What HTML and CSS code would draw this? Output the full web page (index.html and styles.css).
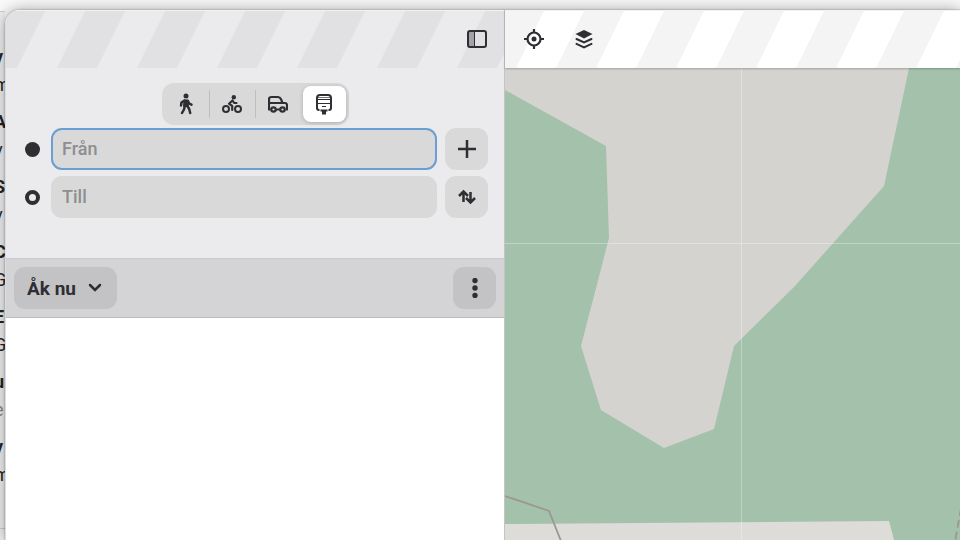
FILE: index.html
```
<!DOCTYPE html>
<html lang="sv">
<head>
  <meta charset="utf-8">
  <title>Kartor</title>
  <link rel="stylesheet" href="styles.css">
</head>
<body>
  <div class="desktop">
    <div class="backdrop" aria-hidden="true">
      <ul class="mail-list">
        <li><b>v</b><span>m</span></li>
        <li><b>A</b><span>v</span></li>
        <li><b>S</b><span>v</span></li>
        <li><b>C</b><span>G</span></li>
        <li><b>E</b><span>G</span></li>
        <li><b>u</b><span class="dim">e</span></li>
        <li><b>v</b><span>m</span></li>
      </ul>
    </div>

    <main class="window">
      <section class="sidebar">
        <header class="headerbar headerbar-side">
          <button type="button" class="icon-button" aria-label="Visa sidopanel">
            <svg width="20" height="18" viewBox="0 0 20 18">
              <path d="M2 2h5v14H2z" fill="#a3a3a6"/>
              <rect x="1" y="1" width="18" height="16" rx="2" fill="none" stroke="#2e2e33" stroke-width="2"/>
              <path d="M7.500 1v16" stroke="#2e2e33" stroke-width="1"/>
            </svg>
          </button>
        </header>

        <form class="route">
          <div class="modes" role="radiogroup" aria-label="Färdsätt">
            <label class="mode">
              <input type="radio" name="mode" value="walk" aria-label="Gå">
              <svg width="20" height="22" viewBox="0 0 20 22" fill="none" stroke="#2e2e33" stroke-linecap="round" stroke-linejoin="round">
                <circle cx="10" cy="3" r="2.500" fill="#2e2e33" stroke="none"/>
                <path d="M8.500 7.500h3l.5 5.500H8z" fill="#2e2e33" stroke-width="2"/>
                <path d="M8.500 7.500L5.500 9.500 5 12.500M11.800 7.800l1.400 2.700 2.300 1.200M8.700 13.500L8 16.500 6 20M11 12.500l2.200 3.500 1 4" stroke-width="2.500"/>
              </svg>
            </label>
            <span class="divider"></span>
            <label class="mode">
              <input type="radio" name="mode" value="bike" aria-label="Cykla">
              <svg width="20" height="20" viewBox="0 0 20 20" fill="none" stroke="#2e2e33" stroke-linecap="round" stroke-linejoin="round">
                <circle cx="4" cy="15" r="3" stroke-width="2"/>
                <circle cx="16" cy="15" r="3" stroke-width="2"/>
                <circle cx="11.800" cy="3.200" r="2.200" fill="#2e2e33" stroke="none"/>
                <path d="M14.500 9h-2.300L10.500 6.500 7 9.700l3.200 2.300v4" stroke-width="2.200"/>
              </svg>
            </label>
            <span class="divider"></span>
            <label class="mode">
              <input type="radio" name="mode" value="car" aria-label="Kör">
              <svg width="20" height="20" viewBox="0 0 20 20" fill="none" stroke="#2e2e33" stroke-linejoin="round">
                <path d="M2.500 15.500H1V5.500Q1 3 3.500 3H10q2 0 3 2.200L14.500 9H17q2 0 2 2.500v4h-1.500M8 15.500h4" stroke-width="2.200"/>
                <path d="M1 9h13.500" stroke-width="2"/>
                <circle cx="5.500" cy="15.500" r="2.200" stroke-width="2.200"/>
                <circle cx="14.500" cy="15.500" r="2.200" stroke-width="2.200"/>
              </svg>
            </label>
            <label class="mode mode-last">
              <input type="radio" name="mode" value="transit" aria-label="Kollektivtrafik" checked>
              <svg width="20" height="22" viewBox="0 0 20 22" fill="none" stroke="#2e2e33" stroke-linejoin="round">
                <path d="M5.500 17H5q-2 0-2-2V5q0-3 3-3h8q3 0 3 3v10q0 2-2 2h-.5" stroke-width="2"/>
                <path d="M4 4.500h12" stroke="#77777a" stroke-width="1"/>
                <path d="M3 6.500h14M3 10.500h14" stroke-width="1"/>
                <path d="M8 13.500h4" stroke-width="1"/>
                <path d="M6.500 16.500h7v2H12v3H8v-3H6.500z" fill="#2e2e33" stroke="none"/>
              </svg>
            </label>
          </div>

          <div class="stop">
            <span class="dot dot-from"></span>
            <input type="text" class="entry entry-active" placeholder="Från" aria-label="Från" autofocus>
            <button type="button" class="square-button" aria-label="Lägg till stopp">
              <svg width="20" height="20" viewBox="0 0 20 20">
                <path d="M10 1v18M1 10h18" stroke="#2e2e33" stroke-width="2.500"/>
              </svg>
            </button>
          </div>
          <div class="stop">
            <span class="dot dot-to"></span>
            <input type="text" class="entry" placeholder="Till" aria-label="Till">
            <button type="button" class="square-button" aria-label="Byt riktning">
              <svg width="20" height="16" viewBox="0 0 20 16" fill="none" stroke="#2e2e33" stroke-width="2.500" stroke-linejoin="miter">
                <path d="M6.500 13V3M2 7l4.500-4.500L11 7M13.500 3v10M9 9l4.500 4.500L18 9"/>
              </svg>
            </button>
          </div>
        </form>

        <div class="toolbar">
          <button type="button" class="time-button">
            Åk nu
            <svg width="14" height="10" viewBox="0 0 14 10">
              <path d="M2 2l5 5 5-5" fill="none" stroke="#2e2e33" stroke-width="2.500" stroke-linecap="round"/>
            </svg>
          </button>
          <button type="button" class="square-button menu-button" aria-label="Alternativ">
            <svg width="6" height="20" viewBox="0 0 6 20" fill="#2e2e33">
              <circle cx="3" cy="2.500" r="2.700"/>
              <circle cx="3" cy="10" r="2.700"/>
              <circle cx="3" cy="17.500" r="2.700"/>
            </svg>
          </button>
        </div>
        <div class="results"></div>
      </section>

      <section class="content">
        <header class="headerbar headerbar-map">
          <button type="button" class="icon-button" aria-label="Min position">
            <svg width="20" height="20" viewBox="0 0 20 20" fill="none" stroke="#2e2e33">
              <circle cx="10" cy="10" r="6.500" stroke-width="2.200"/>
              <circle cx="10" cy="10" r="2.500" fill="#2e2e33" stroke="none"/>
              <path d="M10 0v4M10 16v4M0 10h4M16 10h4" stroke-width="2.200"/>
            </svg>
          </button>
          <button type="button" class="icon-button" aria-label="Lager">
            <svg width="18" height="20" viewBox="0 0 18 20" fill="none" stroke="#2e2e33" stroke-width="2" stroke-linecap="round">
              <path d="M9 1l8.500 4L9 9.500.5 5z" fill="#2e2e33" stroke="none"/>
              <path d="M1.500 10L9 13.500l7.500-3.500M1.500 14.800L9 18.300l7.500-3.500"/>
            </svg>
          </button>
        </header>
        <svg class="map" viewBox="0 0 455 472" preserveAspectRatio="xMinYMin slice" role="img" aria-label="Karta">
          <rect width="1400" height="1400" fill="#a4c2ab"/>
          <path d="M0 0H404L379 118 289 219 229 278 209 361 159 380 96 342 76 278 104 170 101 78 0 22z" fill="#d5d3cf"/>
          <path d="M0 456L384 453 389 472V1400H0z" fill="#dedcd9"/>
          <path d="M236.500 0v472M0 175.500h455" stroke="#fff" stroke-opacity=".3"/>
          <path d="M0 428l44 15 12 30" fill="none" stroke="#9b9892" stroke-width="1.800"/>
          <path d="M456 440l-6 34" fill="none" stroke="#9b9892" stroke-width="1.800" stroke-dasharray="8 4"/>
        </svg>
      </section>
    </main>
  </div>
</body>
</html>
```
FILE: styles.css
```
* {
  box-sizing: border-box;
}

body {
  margin: 0;
  font-family: Roboto, "Liberation Sans", sans-serif;
  font-size: 18px;
  color: #2e2e33;
  background-color: #fafafa;
}

button,
input {
  font: inherit;
  color: inherit;
}

button {
  display: flex;
  align-items: center;
  justify-content: center;
  padding: 0;
  border: none;
  background: none;
}

.desktop {
  display: flex;
  height: 100vh;
  overflow: hidden;
}

/* window behind the map window */
.backdrop {
  flex: 0 0 5px;
  margin-top: 11px;
  overflow: hidden;
  border-top: 1px solid #d0d0d0;
  background-color: #f0f0f0;
}

.mail-list {
  width: 40px;
  margin: 0 0 0 -6px;
  padding: 31px 0 30px;
  border-bottom: 1px solid #ccc;
  list-style: none;
  color: #222;
  opacity: 0.99;
}

.mail-list li {
  height: 65px;
  line-height: 28px;
}

.mail-list b,
.mail-list span {
  display: block;
}

.mail-list .dim {
  color: #888;
}

.window {
  position: relative;
  display: grid;
  grid-template-columns: 11fr 10fr;
  flex: 1;
  margin-top: 10px;
  overflow: hidden;
  border-radius: 15px 0 0 0;
  background-color: #fff;
  box-shadow: 0 0 2px rgba(0, 0, 0, 0.4), 0 0 16px rgba(0, 0, 0, 0.35);
}

.sidebar,
.content {
  display: flex;
  flex-direction: column;
  min-width: 0;
  min-height: 0;
}

.sidebar {
  border-left: 1px solid #dcdcdd;
  border-right: 1px solid #c4c4c6;
  background-color: #ebebed;
}

.headerbar {
  display: flex;
  flex: 0 0 58px;
  align-items: center;
  padding-bottom: 1px;
  border-top: 1px solid #f2f2f3;
  background-repeat: repeat-x;
  background-position: 51px 0;
}

.headerbar-side {
  justify-content: flex-end;
  padding-right: 7px;
  background-image: url("data:image/svg+xml,%3Csvg xmlns='http://www.w3.org/2000/svg' width='80' height='57'%3E%3Cpath d='M0 57L28 0H68L40 57z' fill='%23e1e1e3'/%3E%3C/svg%3E");
}

.headerbar-map {
  position: relative;
  gap: 10px;
  padding-left: 9px;
  background-color: #fff;
  background-image: url("data:image/svg+xml,%3Csvg xmlns='http://www.w3.org/2000/svg' width='80' height='57'%3E%3Cpath d='M0 57L28 0H68L40 57z' fill='%23f4f4f4'/%3E%3C/svg%3E");
  box-shadow: 0 1px 2px rgba(0, 0, 0, 0.25);
}

.icon-button {
  width: 40px;
  height: 40px;
}

.route {
  display: flex;
  flex-direction: column;
  gap: 6px;
  padding: 15px 0 40px;
}

.modes {
  display: flex;
  align-self: center;
  padding: 3px;
  margin-bottom: -3px;
  border-radius: 12px;
  background-color: #d9d9da;
}

.mode {
  display: flex;
  position: relative;
  align-items: center;
  justify-content: center;
  width: 43px;
  height: 36px;
  border-radius: 8px;
}

.mode input {
  position: absolute;
  inset: 0;
  margin: 0;
  opacity: 0;
}

.mode:has(input:checked) {
  background-color: #fff;
  box-shadow: 0 1px 4px rgba(0, 0, 0, 0.2);
}

.mode-last {
  margin-left: 3px;
}

.divider {
  width: 1px;
  margin: 4px 1px;
  background-color: #bfbfc0;
}

.stop {
  display: flex;
  align-items: center;
  padding: 0 16px 0 19px;
}

.dot {
  width: 15px;
  height: 15px;
  margin-right: 11px;
  border-radius: 50%;
}

.dot-from {
  background-color: #2e2e33;
}

.dot-to {
  border: 4px solid #2e2e33;
}

.entry {
  flex: 1;
  min-width: 0;
  height: 42px;
  padding: 0 11px 1px;
  border: none;
  border-radius: 11px;
  outline: none;
  background-color: #d9d9d9;
  caret-color: #999;
}

.entry::placeholder {
  color: #8e8e90;
  font-weight: 500;
  opacity: 1;
}

.entry-active {
  box-shadow: inset 0 0 0 2px #6b9fd3;
}

.square-button {
  width: 43px;
  height: 42px;
  margin-left: 8px;
  border-radius: 11px;
  background-color: #d9d9da;
}

.toolbar {
  display: flex;
  align-items: center;
  justify-content: space-between;
  padding: 8px;
  border-top: 1px solid #cbcbcd;
  border-bottom: 1px solid #bbbbbd;
  background-color: #d4d4d6;
}

.time-button {
  gap: 12px;
  height: 42px;
  padding: 0 15px 0 13px;
  border-radius: 11px;
  background-color: #c3c3c5;
  font-weight: bold;
  font-size: 19px;
}

.menu-button {
  background-color: #c3c3c5;
}

.results {
  flex: 1;
  background-color: #fff;
}

.map {
  display: block;
  flex: 1;
  width: 100%;
  min-height: 0;
}
```
